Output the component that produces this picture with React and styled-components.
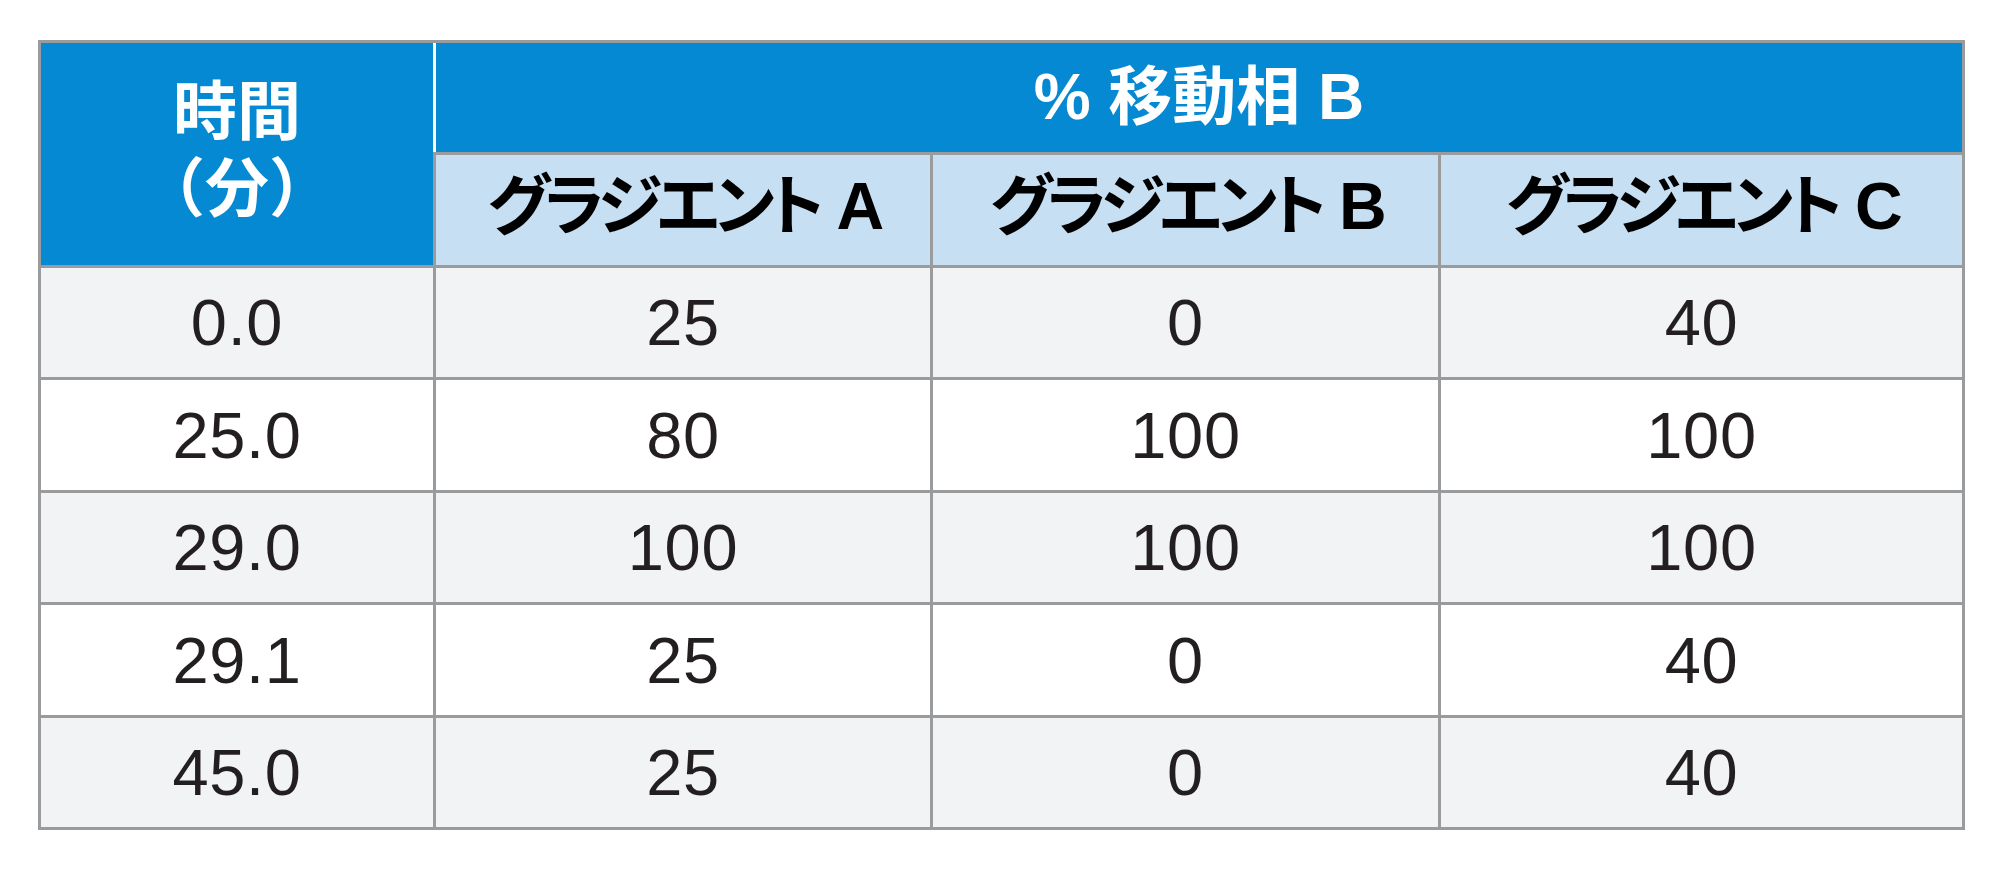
import React from 'react';
import styled, { createGlobalStyle } from 'styled-components';

const GlobalStyle = createGlobalStyle`
  html, body {
    margin: 0;
    padding: 0;
    background: #ffffff;
  }
`;

const Page = styled.div`
  padding: 40px 0 0 38px;
`;

const Grid = styled.div`
  display: grid;
  grid-template-columns: 392px 494px 505px 521px;
  grid-template-rows: 109px 110px 109px 110px 109px 110px 109px;
  gap: 3px;
  padding: 3px;
  width: max-content;
  background: #9a9b9d;
`;

const BlueCell = styled.div`
  grid-column: ${(p) => p.$col};
  grid-row: ${(p) => p.$row};
  display: flex;
  flex-direction: column;
  align-items: center;
  justify-content: center;
  background: #0489d2;
  color: #ffffff;
  font-family: "Liberation Sans", "Noto Sans CJK JP", sans-serif;
  font-weight: 700;
  font-size: 64px;
  line-height: 77px;
  ${(p) => p.$divider && 'box-shadow: -3px 0 0 #ffffff;'}
`;

const HeadLine = styled.span`
  display: block;
  padding-bottom: ${(p) => (p.$raise ? '6px' : '0')};
`;

const SubHead = styled.div`
  display: flex;
  align-items: center;
  justify-content: center;
  padding-bottom: 20px;
  background: #c6dff2;
  color: #000000;
  font-family: "Liberation Sans", "Noto Sans CJK JP", sans-serif;
  font-weight: 700;
  font-size: 66px;
  font-feature-settings: "palt";
  letter-spacing: -0.085em;
  word-spacing: 5px;
`;

const Cell = styled.div`
  display: flex;
  align-items: center;
  justify-content: center;
  background: ${(p) => (p.$striped ? '#f2f3f5' : '#ffffff')};
  color: #231f20;
  font-family: "Liberation Sans", Arial, sans-serif;
  font-size: 65px;
  letter-spacing: 0.01em;
`;

const rows = [
  ['0.0', '25', '0', '40'],
  ['25.0', '80', '100', '100'],
  ['29.0', '100', '100', '100'],
  ['29.1', '25', '0', '40'],
  ['45.0', '25', '0', '40'],
];

const gradients = ['グラジエント A', 'グラジエント B', 'グラジエント C'];

export default function App() {
  return (
    <Page>
      <GlobalStyle />
      <Grid>
        <BlueCell $col="1" $row="1 / span 2">
          <HeadLine>時間</HeadLine>
          <HeadLine $raise>（分）</HeadLine>
        </BlueCell>
        <BlueCell $col="2 / span 3" $row="1" $divider>
          % 移動相 B
        </BlueCell>
        {gradients.map((g) => (
          <SubHead key={g}>{g}</SubHead>
        ))}
        {rows.map((row, i) =>
          row.map((value, j) => (
            <Cell key={`${i}-${j}`} $striped={i % 2 === 0}>
              {value}
            </Cell>
          ))
        )}
      </Grid>
    </Page>
  );
}
